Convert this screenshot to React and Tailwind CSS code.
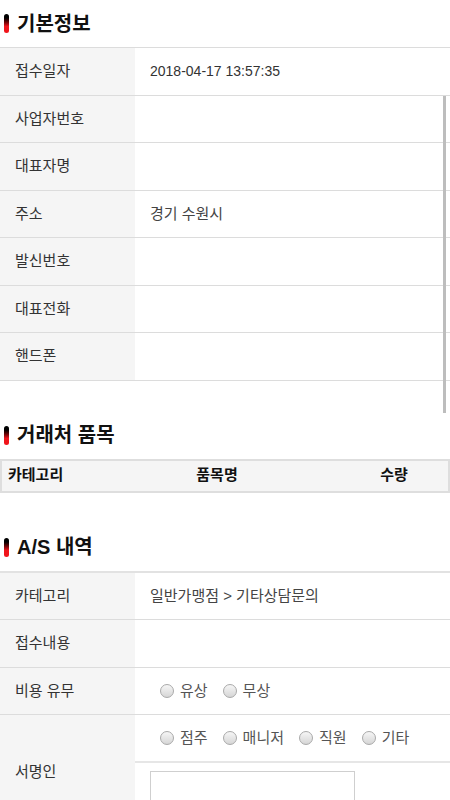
import React from 'react';

const font = { fontFamily: '"Liberation Sans", "Noto Sans CJK KR", sans-serif' };

const Heading = ({ children }) => (
  <div className="flex items-center h-[47px] pl-1">
    <span className="w-[5px] h-[19px] rounded-[3px] bg-gradient-to-b from-[#000] from-15% to-[#f0141b] to-65% mr-2" />
    <h2 className="text-[20px] font-bold text-[#111]">{children}</h2>
  </div>
);

const Row = ({ label, value }) => (
  <div className="flex h-[47.5px] border-b border-[#dcdcdc]">
    <div className="w-[135px] bg-[#f5f5f5] flex items-center pl-[15px] text-[15px] text-[#333]">{label}</div>
    <div className="flex-1 flex items-center pl-[15px] text-[15px] text-[#444]">{value}</div>
  </div>
);

const Radio = ({ label }) => (
  <label className="flex items-center mr-[15px]">
    <span className="w-[14px] h-[14px] rounded-full border border-[#a9a9a9] bg-gradient-to-b from-[#f6f6f6] to-[#d6d6d6] mr-[6px]" />
    <span className="text-[15px] text-[#555]">{label}</span>
  </label>
);

export default function App() {
  return (
    <div className="relative w-[450px] bg-white" style={font}>
      <Heading>기본정보</Heading>
      <div className="border-t border-[#dcdcdc]">
        <Row label="접수일자" value={<span className="text-[14px] text-[#333]">2018-04-17 13:57:35</span>} />
        <Row label="사업자번호" value="" />
        <Row label="대표자명" value="" />
        <Row label="주소" value="경기 수원시" />
        <Row label="발신번호" value="" />
        <Row label="대표전화" value="" />
        <Row label="핸드폰" value="" />
      </div>

      <div className="mt-[31px]">
        <Heading>거래처 품목</Heading>
      </div>
      <div className="flex h-[34px] border-2 border-[#dedede] bg-[#f5f5f5] text-[15px] font-bold text-[#111] items-center">
        <div className="w-[92px] pl-[6px]">카테고리</div>
        <div className="w-[246px] text-center">품목명</div>
        <div className="flex-1 text-center">수량</div>
      </div>

      <div className="mt-[31px]">
        <Heading>A/S 내역</Heading>
      </div>
      <div className="border-t-2 border-[#e2e2e2]">
        <Row label="카테고리" value="일반가맹점 > 기타상담문의" />
        <Row label="접수내용" value="" />
        <Row label="비용 유무" value={<div className="flex pl-[10px]"><Radio label="유상" /><Radio label="무상" /></div>} />
        <div className="flex border-b border-[#dcdcdc]">
          <div className="w-[135px] bg-[#f5f5f5] flex items-center pl-[15px] text-[15px] text-[#333]">서명인</div>
          <div className="flex-1">
            <div className="flex items-center h-[47.5px] pl-[25px] border-b-2 border-[#e6e6e6]">
              <Radio label="점주" />
              <Radio label="매니저" />
              <Radio label="직원" />
              <Radio label="기타" />
            </div>
            <div className="pl-[15px] pt-[8px] pb-[12px]">
              <div className="w-[205px] h-[46px] border border-[#cfcfcf] bg-white" />
            </div>
          </div>
        </div>
      </div>

      <div className="absolute left-[443px] top-[96px] w-[3px] h-[317px] bg-[#bdbdbd]" />
    </div>
  );
}
